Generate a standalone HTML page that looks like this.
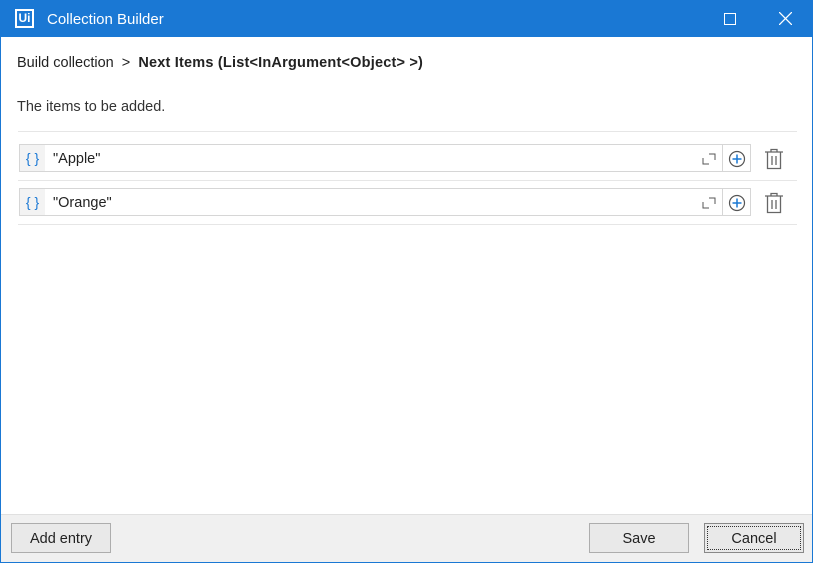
<!DOCTYPE html>
<html><head><style>
*{margin:0;padding:0;box-sizing:border-box}
body{width:813px;height:563px;overflow:hidden;font-family:"Liberation Sans",sans-serif;background:#fff;position:relative}
.win{position:absolute;left:0;top:0;width:813px;height:563px;border:1px solid #1a78d4;background:#fff}
.title{position:absolute;left:0;top:0;width:813px;height:37px;background:#1a78d4;color:#fff}
.logo{position:absolute;left:15px;top:9px;width:19px;height:19px;border:2px solid #fff;font-size:12px;font-weight:bold;text-align:center;line-height:15px}
.tt{position:absolute;left:47px;top:11px;font-size:15px}
.t{position:absolute;font-size:14.5px;color:#222}
.line{position:absolute;left:18px;width:779px;height:1px;background:#e6e6e6}
.row{position:absolute;left:19px;width:704px;height:28px;border:1px solid #d6d6d6;background:#fff}
.br{position:absolute;left:0;top:0;width:25px;height:26px;background:#f3f3f3;color:#1a78d4;font-size:14px;text-align:center;line-height:27px}
.val{position:absolute;left:33px;top:6px;font-size:14.5px;color:#222}
.plus{position:absolute;left:722px;width:29px;height:28px;border:1px solid #d6d6d6}
.foot{position:absolute;left:1px;top:514px;width:811px;height:48px;background:#f0f0f0;border-top:1px solid #e0e0e0}
.btn{position:absolute;height:30px;border:1px solid #adadad;background:#e9e9e9;font-size:14.5px;color:#222;text-align:center;line-height:31px}
</style></head><body>
<div class="win"></div>
<div class="title"><div class="logo">Ui</div><div class="tt">Collection Builder</div>
<svg style="position:absolute;left:724px;top:13px" width="12" height="12"><rect x="0.5" y="0.5" width="11" height="11" fill="none" stroke="#fff"/></svg>
<svg style="position:absolute;left:779px;top:12px" width="13" height="13"><path d="M0 0L13 13M13 0L0 13" stroke="#fff" stroke-width="1.3"/></svg>
</div>
<div class="t" style="left:17px;top:55px">Build collection &nbsp;&gt;&nbsp; <b style="letter-spacing:0.2px">Next Items (List&lt;InArgument&lt;Object&gt; &gt;)</b></div>
<div class="t" style="left:17px;top:99px;color:#333">The items to be added.</div>
<div class="line" style="top:131px"></div>
<div class="line" style="top:180px"></div>
<div class="line" style="top:224px"></div>
<div class="row" style="top:144px"><div class="br">{ }</div><div class="val">"Apple"</div></div>
<div class="row" style="top:188px"><div class="br">{ }</div><div class="val">"Orange"</div></div>
<svg style="position:absolute;left:702px;top:153px" width="14" height="12"><path d="M1 5V11H7M7 1H13V7" stroke="#555" fill="none"/></svg>
<svg style="position:absolute;left:702px;top:197px" width="14" height="12"><path d="M1 5V11H7M7 1H13V7" stroke="#555" fill="none"/></svg>
<div class="plus" style="top:144px"></div><div class="plus" style="top:188px"></div>
<svg style="position:absolute;left:728px;top:150px" width="18" height="18"><circle cx="9" cy="9" r="7.5" fill="none" stroke="#555" stroke-width="1.2"/><path d="M9 4.5V13.5M4.5 9H13.5" stroke="#1a78d4" stroke-width="1.5"/></svg>
<svg style="position:absolute;left:728px;top:194px" width="18" height="18"><circle cx="9" cy="9" r="7.5" fill="none" stroke="#555" stroke-width="1.2"/><path d="M9 4.5V13.5M4.5 9H13.5" stroke="#1a78d4" stroke-width="1.5"/></svg>
<svg style="position:absolute;left:764px;top:148px" width="20" height="22"><path d="M1 4H19M7 4V1.5H13V4M3.5 4V20.5H16.5V4M8 8V17M12 8V17" stroke="#666" stroke-width="1.3" fill="none"/></svg>
<svg style="position:absolute;left:764px;top:192px" width="20" height="22"><path d="M1 4H19M7 4V1.5H13V4M3.5 4V20.5H16.5V4M8 8V17M12 8V17" stroke="#666" stroke-width="1.3" fill="none"/></svg>
<div class="foot"></div>
<div class="btn" style="left:11px;top:523px;width:100px">Add entry</div>
<div class="btn" style="left:589px;top:523px;width:100px">Save</div>
<div class="btn" style="left:704px;top:523px;width:100px;border-color:#888"><div style="position:absolute;left:2px;top:2px;right:2px;bottom:2px;border:1px dotted #333"></div>Cancel</div>
</body></html>
